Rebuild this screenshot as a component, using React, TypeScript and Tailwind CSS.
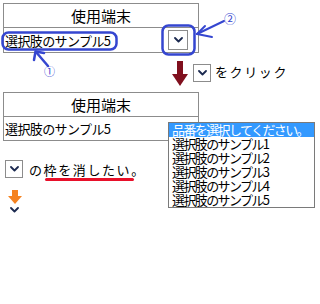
import React from "react";

// 小さな下向きシェブロン（セレクトのボタン）
const Chevron = ({ w = 9, h = 6 }: { w?: number; h?: number }) =>
<svg className="block" width={w} height={h} viewBox="0 0 9 6" fill="none">
    <polyline points="1 1 4.5 4.5 8 1" stroke="#1c2a50" strokeWidth="1.8" strokeLinecap="round" strokeLinejoin="round" />
  </svg>;


const ChevronBox = ({ className }: { className?: string }) =>
<div className={`flex items-center justify-center border border-[#8c8c8c] bg-white ${className ?? ""}`}>
    <Chevron />
  </div>;


const options = [
"品番を選択してください。",
"選択肢のサンプル1",
"選択肢のサンプル2",
"選択肢のサンプル3",
"選択肢のサンプル4",
"選択肢のサンプル5"];


export default function App() {
  return (
    <div className="relative flex flex-col items-start w-[320px] h-[304px] overflow-hidden bg-white pt-[3px] pl-[3px] text-black font-['Noto_Sans_CJK_JP',sans-serif]">
      {/* テーブル1（閉じた状態） */}
      <div className="w-[196px] border border-[#8c8c8c]">
        <div className="h-[24px] border-b border-[#8c8c8c] flex items-center justify-center text-[15px] leading-none">
          使用端末
        </div>
        <div className="h-[24px] flex items-center justify-between">
          <span className="pl-[1px] text-[13px] tracking-[-0.6px] leading-none">選択肢のサンプル5</span>
          <ChevronBox className="w-[20px] h-[20px] mr-[10px]" />
        </div>
      </div>

      {/* ↓ [v] をクリック */}
      <div className="mt-[8px] ml-[169px] flex items-start">
        <svg className="block" width="16" height="25" viewBox="0 0 16 25">
          <rect x="5" y="0" width="6" height="14" fill="#80101e" />
          <polygon points="0,13 16,13 8,25" fill="#80101e" />
        </svg>
        <ChevronBox className="w-[18px] h-[18px] mt-[3px] ml-[5px]" />
        <span className="mt-[4px] ml-[4px] text-[13px] tracking-[1.6px] leading-none">をクリック</span>
      </div>

      {/* テーブル2（開いた状態） */}
      <div className="mt-[6px] w-[196px] border border-[#8c8c8c]">
        <div className="h-[24px] border-b border-[#8c8c8c] flex items-center justify-center text-[15px] leading-none">
          使用端末
        </div>
        <div className="h-[23px] flex items-center">
          <span className="pl-[1px] text-[13px] tracking-[-0.6px] leading-none">選択肢のサンプル5</span>
        </div>
      </div>

      {/* [v] の枠を消したい。 */}
      <div className="mt-[19px] ml-[2px] flex items-center">
        <ChevronBox className="w-[18px] h-[18px]" />
        <span className="ml-[6px] text-[13px] tracking-[1.6px] leading-none">
          の
          <span className="relative">
            枠を消したい
            <span className="absolute left-[1px] -right-[3px] top-[18px] h-[3px] rounded-full bg-[#e8102a]" />
          </span>
          。
        </span>
      </div>

      {/* オレンジの矢印 → 枠なしシェブロン */}
      <div className="mt-[12px] ml-[5px] flex flex-col items-start">
        <svg className="block" width="14" height="14" viewBox="0 0 14 14">
          <rect x="4" y="0" width="6" height="7" fill="#f58220" />
          <polygon points="0,6 14,6 7,14" fill="#f58220" />
        </svg>
        <div className="mt-[3px] ml-[2px]">
          <Chevron w={9} h={6} />
        </div>
      </div>

      {/* 開いたドロップダウン */}
      <div className="absolute left-[168px] top-[122px] w-[147px] border border-[#7a7a7a] bg-white text-[13px] leading-[14px] tracking-[-1.6px]">
        {options.map((o, i) =>
        <div key={o} className={`h-[14px] pl-[3px] whitespace-nowrap ${i === 0 ? "bg-[#3399ff] text-white" : ""}`}>
            {o}
          </div>
        )}
      </div>

      {/* 注記（青い囲みと矢印） */}
      <svg className="absolute inset-0 pointer-events-none" width="320" height="304" viewBox="0 0 320 304" fill="none">
        <rect x="2.5" y="32.5" width="114" height="17" rx="6" stroke="#3546d0" strokeWidth="2.5" />
        <line x1="36" y1="52" x2="48" y2="66" stroke="#3546d0" strokeWidth="2.5" strokeLinecap="round" />
        <polyline points="34,60 35.5,51.5 44,53" stroke="#3546d0" strokeWidth="2.5" strokeLinecap="round" strokeLinejoin="round" />

        <rect x="162.5" y="25.5" width="32" height="29" rx="6" stroke="#3546d0" strokeWidth="2.5" />
        <line x1="197" y1="34" x2="224" y2="21" stroke="#3546d0" strokeWidth="2" strokeLinecap="round" />
        <line x1="197" y1="34" x2="205" y2="26" stroke="#3546d0" strokeWidth="2" strokeLinecap="round" />
        <line x1="197" y1="34" x2="212" y2="37" stroke="#3546d0" strokeWidth="2" strokeLinecap="round" />
      </svg>
      <span className="absolute left-[44px] top-[66px] text-[11px] leading-none text-[#3546d0]">①</span>
      <span className="absolute left-[224px] top-[13px] text-[12px] leading-none text-[#3546d0]">②</span>
    </div>);

}
